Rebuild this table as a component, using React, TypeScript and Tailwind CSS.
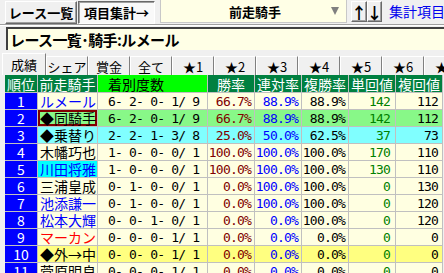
import React from 'react';

type Row = {
  n: string;
  name: string;
  nameColor: string;
  rec: string;
  w: string;
  r: string;
  f: string;
  t: string;
  h: string;
  rowBg: string;
  nameBox?: boolean;
  nameBg?: string;
};

const CREAM = 'bg-[#ffffe1]';

const rows: Row[] = [
  { n: '1', name: 'ルメール', nameColor: 'text-[#0000ff]', rec: '6- 2- 0- 1/ 9', w: '66.7%', r: '88.9%', f: '88.9%', t: '142', h: '112', rowBg: CREAM },
  { n: '2', name: '◆同騎手', nameColor: 'text-black', rec: '6- 2- 0- 1/ 9', w: '66.7%', r: '88.9%', f: '88.9%', t: '142', h: '112', rowBg: 'bg-[#88f888]', nameBox: true },
  { n: '3', name: '◆乗替り', nameColor: 'text-black', rec: '2- 2- 1- 3/ 8', w: '25.0%', r: '50.0%', f: '62.5%', t: '37', h: '73', rowBg: 'bg-[#80ffff]' },
  { n: '4', name: '木幡巧也', nameColor: 'text-black', rec: '1- 0- 0- 0/ 1', w: '100.0%', r: '100.0%', f: '100.0%', t: '170', h: '110', rowBg: CREAM },
  { n: '5', name: '川田将雅', nameColor: 'text-[#0000ff]', rec: '1- 0- 0- 0/ 1', w: '100.0%', r: '100.0%', f: '100.0%', t: '130', h: '110', rowBg: CREAM, nameBg: 'bg-[#00ffff]' },
  { n: '6', name: '三浦皇成', nameColor: 'text-black', rec: '0- 1- 0- 0/ 1', w: '0.0%', r: '100.0%', f: '100.0%', t: '0', h: '130', rowBg: CREAM },
  { n: '7', name: '池添謙一', nameColor: 'text-[#0000ff]', rec: '0- 1- 0- 0/ 1', w: '0.0%', r: '100.0%', f: '100.0%', t: '0', h: '120', rowBg: CREAM },
  { n: '8', name: '松本大輝', nameColor: 'text-[#0000ff]', rec: '0- 0- 1- 0/ 1', w: '0.0%', r: '0.0%', f: '100.0%', t: '0', h: '120', rowBg: CREAM },
  { n: '9', name: 'マーカン', nameColor: 'text-[#ff0000]', rec: '0- 0- 0- 1/ 1', w: '0.0%', r: '0.0%', f: '0.0%', t: '0', h: '0', rowBg: CREAM },
  { n: '10', name: '◆外→中', nameColor: 'text-black', rec: '0- 0- 0- 1/ 1', w: '0.0%', r: '0.0%', f: '0.0%', t: '0', h: '0', rowBg: 'bg-[#ffff80]' },
  { n: '11', name: '菅原明良', nameColor: 'text-black', rec: '0- 0- 0- 1/ 1', w: '0.0%', r: '0.0%', f: '0.0%', t: '0', h: '0', rowBg: CREAM },
];

const tabs = ['シェア', '賞金', '全て', '★1', '★2', '★3', '★4', '★5', '★6', '★7'];

const MONO = "font-['DejaVu_Sans_Mono',monospace] text-[13px] tracking-[-0.8px] whitespace-pre";

function Btn({ children, className }: { children: React.ReactNode; className: string }) {
  return (
    <div
      className={
        'flex items-center justify-center whitespace-nowrap border border-t-white border-l-white border-r-[#696969] border-b-[#696969] shadow-[inset_-1px_-1px_0_#a0a0a0] ' +
        className
      }
    >
      {children}
    </div>
  );
}

export default function App() {
  return (
    <div className="w-[444px] h-[273px] overflow-hidden bg-[#f0f0f0] font-['Noto_Sans_CJK_JP',sans-serif] text-black leading-none">
      {/* toolbar */}
      <div className="flex h-[24px] items-start">
        <Btn className="ml-[5px] mt-[1px] h-[23px] w-[72px] shrink-0 bg-[#f0f0f0] text-[13px] font-bold">レース一覧</Btn>
        <div className="ml-[1px] mt-[1px] flex h-[23px] w-[77px] shrink-0 items-center justify-center whitespace-nowrap border border-t-[#696969] border-l-[#696969] border-r-white border-b-white bg-[#f9f9f9] text-[13px] font-bold shadow-[inset_1px_1px_0_#a0a0a0]">
          項目集計→
        </div>
        <div className="ml-[5px] flex h-[23px] w-[187px] shrink-0 items-center border-l border-b border-r border-[#c8c8c8] bg-[#ffffe6]">
          <div className="flex-1 whitespace-nowrap pl-[18px] text-center text-[13px] font-bold">前走騎手</div>
          <div className="mr-[7px] h-0 w-0 border-l-[4px] border-r-[4px] border-t-[8px] border-l-transparent border-r-transparent border-t-[#808080]" />
        </div>
        <Btn className="ml-[4px] mt-[1px] h-[21px] w-[16px] shrink-0 bg-[#f0f0f0] text-[16px] font-bold">↑</Btn>
        <Btn className="mt-[1px] h-[21px] w-[15px] shrink-0 bg-[#f0f0f0] text-[16px] font-bold">↓</Btn>
        <div className="ml-[7px] mt-[4px] shrink-0 whitespace-nowrap text-[14px] text-[#0000ee]">集計項目メニュー</div>
      </div>
      {/* separator */}
      <div className="h-px w-full bg-[#a0a0a0]" />
      <div className="h-px w-full bg-white" />
      {/* title */}
      <div className="ml-[6px] mt-[1px] flex h-[23px] w-[460px] items-center whitespace-nowrap border-t-2 border-l-2 border-[#404040] bg-[#ffffe6] pl-[2px] text-[15px] font-bold tracking-[-0.6px]">
        レース一覧･騎手:ルメール
      </div>
      {/* tabs */}
      <div className="mt-[3px] flex h-[22px] items-end">
        <div className="ml-[2px] flex h-[22px] w-[44px] shrink-0 items-start justify-center whitespace-nowrap border-t border-l border-white border-r border-r-[#808080] pt-[4px] text-[13px]">
          成績
        </div>
        {tabs.map((t) => (
          <div
            key={t}
            className="flex h-[19px] w-[42px] shrink-0 items-center justify-center whitespace-nowrap border-t border-l border-white border-r border-r-[#808080] text-[13px]"
          >
            {t}
          </div>
        ))}
      </div>
      {/* table */}
      <div className="ml-[5px] flex flex-col">
        <div className="flex h-[18px] whitespace-nowrap text-[14px] text-white">
          <div className="flex w-[33px] shrink-0 items-center justify-center border-r border-b border-[#c0c0c0] bg-[#008040]">順位</div>
          <div className="flex w-[60px] shrink-0 items-center justify-center overflow-hidden border-r border-b border-[#c0c0c0] bg-[#008040]">前走騎手</div>
          <div className="flex w-[110px] shrink-0 items-center border-r border-b border-[#c0c0c0] bg-[#00ff00] pl-[10px] text-black">着別度数</div>
          {['勝率', '連対率', '複勝率', '単回値', '複回値'].map((h) => (
            <div key={h} className="flex w-[47px] shrink-0 items-center justify-center overflow-hidden border-r border-b border-[#c0c0c0] bg-[#008040]">
              {h}
            </div>
          ))}
        </div>
        {rows.map((row) => (
          <div key={row.n} className="flex h-[17px]">
            <div className="flex w-[33px] shrink-0 items-center justify-center border-r border-b border-[#c0c0c0] bg-[#0000ff] text-[14px] text-white">
              {row.n}
            </div>
            <div
              className={
                'flex w-[60px] shrink-0 items-center overflow-hidden whitespace-nowrap border-r border-b border-[#c0c0c0] pl-[2px] text-[14px] ' +
                row.nameColor +
                ' ' +
                (row.nameBg ? row.nameBg : row.rowBg) +
                (row.nameBox ? ' shadow-[inset_0_0_0_2px_#800000]' : '')
              }
            >
              {row.name}
            </div>
            <div className={'flex w-[110px] shrink-0 items-center border-r border-b border-[#c0c0c0] pl-[10px] ' + row.rowBg}>
              <span className={MONO}>{row.rec}</span>
            </div>
            <div className={'flex w-[47px] shrink-0 items-center justify-end border-r border-b border-[#c0c0c0] pr-[3px] text-[#800000] ' + row.rowBg}>
              <span className={MONO}>{row.w}</span>
            </div>
            <div className={'flex w-[47px] shrink-0 items-center justify-end border-r border-b border-[#c0c0c0] pr-[3px] text-[#0000ff] ' + row.rowBg}>
              <span className={MONO}>{row.r}</span>
            </div>
            <div className={'flex w-[47px] shrink-0 items-center justify-end border-r border-b border-[#c0c0c0] pr-[3px] text-black ' + row.rowBg}>
              <span className={MONO}>{row.f}</span>
            </div>
            <div className={'flex w-[47px] shrink-0 items-center justify-end border-r border-b border-[#c0c0c0] pr-[5px] text-[#008000] ' + row.rowBg}>
              <span className={MONO}>{row.t}</span>
            </div>
            <div className={'flex w-[47px] shrink-0 items-center justify-end border-r border-b border-[#c0c0c0] pr-[4px] text-black ' + row.rowBg}>
              <span className={MONO}>{row.h}</span>
            </div>
          </div>
        ))}
      </div>
    </div>
  );
}
